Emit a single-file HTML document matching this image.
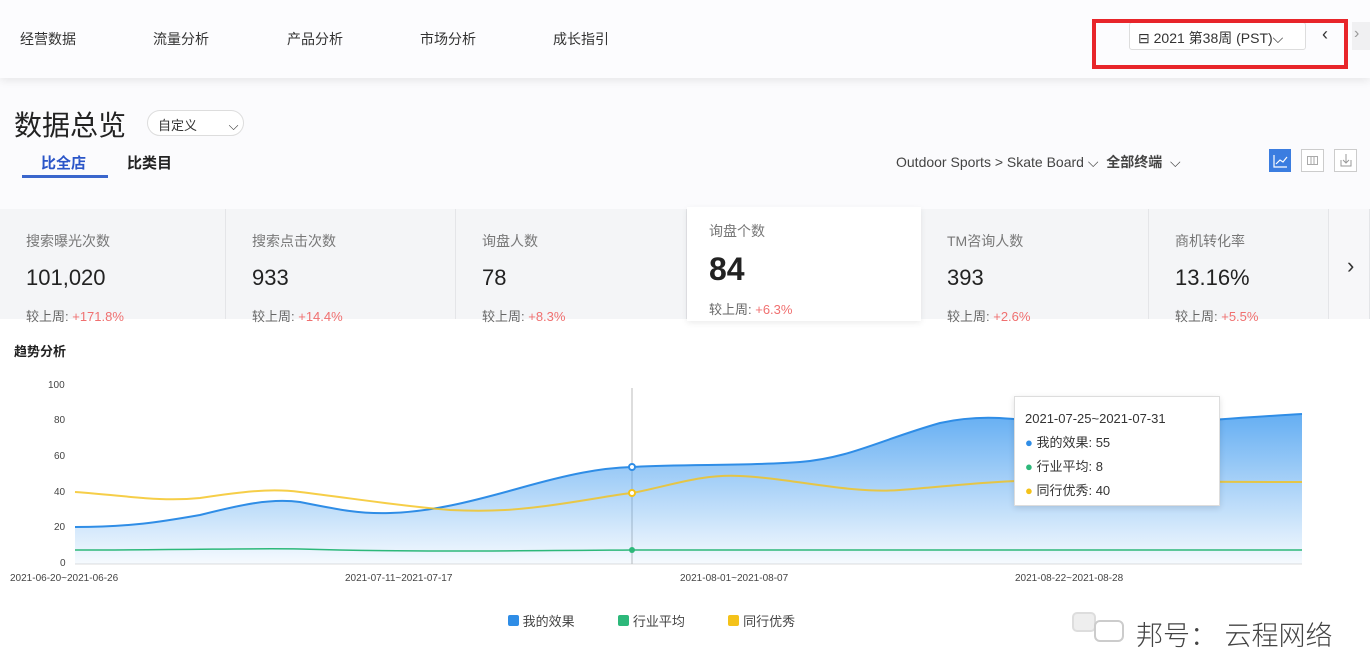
<!DOCTYPE html>
<html><head><meta charset="utf-8"><style>
*{margin:0;padding:0;box-sizing:border-box}
body{width:1370px;height:654px;overflow:hidden;background:#fbfbfd;font-family:"Liberation Sans","Noto Sans CJK SC",sans-serif;color:#333;position:relative}
.a{position:absolute}
.nav{left:0;top:0;width:1370px;height:78px;background:#fcfcfe;box-shadow:0 3px 8px rgba(0,0,0,.08)}
.nav span{position:absolute;top:29px;font-size:14px;color:#333}
.card{position:absolute;top:209px;height:110px;background:#f4f5f7;border-right:1px solid #e4e5e8}
.card .t{position:absolute;left:26px;top:22px;font-size:14px;color:#777}
.card .v{position:absolute;left:26px;top:56px;font-size:22px;color:#222}
.card .c{position:absolute;left:26px;top:97px;font-size:13px;color:#666}
.card .c b{color:#f07070;font-weight:normal}
.ax{position:absolute;font-size:10px;color:#444}
</style></head><body>
<div class="a" style="left:0;top:318px;width:1370px;height:336px;background:#fff"></div>
<div class="a nav">
<span style="left:20px">经营数据</span><span style="left:153px">流量分析</span><span style="left:287px">产品分析</span><span style="left:420px">市场分析</span><span style="left:553px">成长指引</span>
<div class="a" style="left:1129px;top:22px;width:177px;height:28px;border:1px solid #ddd;border-radius:3px;background:#fff;font-size:14px;padding:5px 0 0 8px;color:#333">⊟ 2021 第38周 (PST)⌵</div>
<div class="a" style="left:1322px;top:24px;font-size:18px">‹</div>
<div class="a" style="left:1352px;top:22px;width:18px;height:28px;background:#f0f0f2;font-size:16px;color:#999;padding:3px 0 0 2px">›</div>
<div class="a" style="left:1092px;top:19px;width:256px;height:50px;border:4px solid #e8252a"></div>
</div>
<div class="a" style="left:14px;top:104px;font-size:28px;color:#222">数据总览</div>
<div class="a" style="left:147px;top:110px;width:97px;height:26px;border:1px solid #ddd;border-radius:13px;background:#fff;font-size:13px;padding:4px 0 0 10px">自定义 <span style="margin-left:28px">⌵</span></div>
<div class="a" style="left:41px;top:152px;font-size:15px;color:#2a55c8;font-weight:bold">比全店</div>
<div class="a" style="left:22px;top:175px;width:86px;height:3px;background:#3a66cc"></div>
<div class="a" style="left:127px;top:152px;font-size:15px;color:#222;font-weight:bold">比类目</div>
<div class="a" style="left:896px;top:152px;font-size:14px;color:#444">Outdoor Sports &gt; Skate Board ⌵ &nbsp;<b>全部终端</b> &nbsp;⌵</div>
<svg class="a" style="left:1268px;top:148px" width="92" height="26">
<rect x="1" y="1" width="22" height="23" fill="#3b7de0"/><path d="M6 7v12h13M8 16l4-4 3 2 4-5" stroke="#fff" fill="none" stroke-width="1.2"/>
<rect x="33.5" y="1.5" width="22" height="22" fill="#fff" stroke="#ccc"/><rect x="39.5" y="8.5" width="10" height="8" fill="none" stroke="#aaa"/><path d="M43 8.5v8M46 8.5v8" stroke="#aaa"/>
<rect x="66.5" y="1.5" width="22" height="22" fill="#fff" stroke="#ccc"/><path d="M73 12v6h10v-6M78 6v9M75 12l3 3 3-3" stroke="#999" fill="none"/>
</svg>
<div class="card" style="left:0;width:226px"><div class="t">搜索曝光次数</div><div class="v">101,020</div><div class="c">较上周: <b>+171.8%</b></div></div>
<div class="card" style="left:226px;width:230px"><div class="t">搜索点击次数</div><div class="v">933</div><div class="c">较上周: <b>+14.4%</b></div></div>
<div class="card" style="left:456px;width:231px"><div class="t">询盘人数</div><div class="v">78</div><div class="c">较上周: <b>+8.3%</b></div></div>
<div class="card" style="left:921px;width:228px"><div class="t">TM咨询人数</div><div class="v">393</div><div class="c">较上周: <b>+2.6%</b></div></div>
<div class="card" style="left:1149px;width:180px"><div class="t">商机转化率</div><div class="v">13.16%</div><div class="c">较上周: <b>+5.5%</b></div></div>
<div class="card" style="left:1329px;width:41px;background:#f7f7f9;font-size:22px;padding:44px 0 0 18px">›</div>
<div class="card" style="left:687px;width:234px;top:207px;height:114px;background:#fff;box-shadow:0 2px 6px rgba(0,0,0,.08);border:none"><div class="t" style="left:22px;top:14px">询盘个数</div><div class="v" style="left:22px;top:44px;font-size:32px;font-weight:bold">84</div><div class="c" style="left:22px;top:92px">较上周: <b>+6.3%</b></div></div>
<div class="a" style="left:14px;top:341px;font-size:13px;font-weight:bold;color:#222">趋势分析</div>
<div class="ax" style="left:48px;top:380px">100</div><div class="ax" style="left:54px;top:415px">80</div><div class="ax" style="left:54px;top:451px">60</div><div class="ax" style="left:54px;top:487px">40</div><div class="ax" style="left:54px;top:522px">20</div><div class="ax" style="left:60px;top:558px">0</div>
<svg class="a" style="left:0;top:0" width="1370" height="654">
<defs><linearGradient id="g" x1="0" y1="0" x2="0" y2="1"><stop offset="0" stop-color="#4aa0f0" stop-opacity=".85"/><stop offset="1" stop-color="#4aa0f0" stop-opacity=".05"/></linearGradient></defs>
<line x1="75" y1="564" x2="1302" y2="564" stroke="#ddd"/>
<line x1="632" y1="388" x2="632" y2="564" stroke="#bbb"/>
<path d="M75 527 C130 527 160 522 200 515 C240 505 270 498 300 502 C340 510 360 514 390 513 C430 512 470 502 520 488 C570 474 600 468 632 467 C680 464 750 466 800 462 C850 458 880 440 940 423 C980 414 1010 418 1060 424 C1120 428 1200 420 1302 414 L1302 564 L75 564 Z" fill="url(#g)"/>
<path d="M75 527 C130 527 160 522 200 515 C240 505 270 498 300 502 C340 510 360 514 390 513 C430 512 470 502 520 488 C570 474 600 468 632 467 C680 464 750 466 800 462 C850 458 880 440 940 423 C980 414 1010 418 1060 424 C1120 428 1200 420 1302 414" fill="none" stroke="#2f8de6" stroke-width="2"/>
<path d="M75 492 C130 496 160 502 200 498 C240 492 270 488 300 492 C350 498 400 506 450 510 C490 512 520 510 560 504 C600 498 620 494 632 493 C670 486 700 474 740 476 C790 478 850 494 900 490 C950 486 1000 480 1060 480 C1150 482 1250 482 1302 482" fill="none" stroke="#f4c21a" stroke-width="2" opacity=".8"/>
<path d="M75 550 C200 550 250 548 300 549 C400 552 500 551 632 550 C800 549 1000 549 1302 550" fill="none" stroke="#2db87a" stroke-width="1.5"/>
<circle cx="632" cy="467" r="3" fill="#fff" stroke="#2f8de6" stroke-width="2"/>
<circle cx="632" cy="493" r="3" fill="#fff" stroke="#f4c21a" stroke-width="2"/>
<circle cx="632" cy="550" r="3" fill="#2db87a"/>
</svg>
<div class="a" style="left:1014px;top:396px;width:206px;height:110px;background:#fff;border:1px solid #ddd;box-shadow:0 2px 6px rgba(0,0,0,.12);font-size:13px;padding:10px 0 0 10px;line-height:24px;color:#333">2021-07-25~2021-07-31<br><span style="color:#2f8de6">●</span> 我的效果: 55<br><span style="color:#2db87a">●</span> 行业平均: 8<br><span style="color:#f4c21a">●</span> 同行优秀: 40</div>
<div class="ax" style="left:10px;top:573px">2021-06-20~2021-06-26</div>
<div class="ax" style="left:345px;top:573px">2021-07-11~2021-07-17</div>
<div class="ax" style="left:680px;top:573px">2021-08-01~2021-08-07</div>
<div class="ax" style="left:1015px;top:573px">2021-08-22~2021-08-28</div>
<div class="a" style="left:508px;top:611px;font-size:13px;color:#444"><span style="display:inline-block;width:11px;height:11px;background:#2f8de6;border-radius:2px"></span> 我的效果 <span style="display:inline-block;width:11px;height:11px;background:#2db87a;border-radius:2px;margin-left:40px"></span> 行业平均 <span style="display:inline-block;width:11px;height:11px;background:#f4c21a;border-radius:2px;margin-left:40px"></span> 同行优秀</div>
<div class="a" style="left:1072px;top:612px;width:24px;height:20px;border:2px solid #ddd;border-radius:5px;background:#eee"></div>
<div class="a" style="left:1094px;top:620px;width:30px;height:22px;border:2px solid #ccc;border-radius:6px;background:#fff"></div>
<div class="a" style="left:1136px;top:614px;font-size:27px;color:#444;font-weight:300">邦号： 云程网络</div>
</body></html>
